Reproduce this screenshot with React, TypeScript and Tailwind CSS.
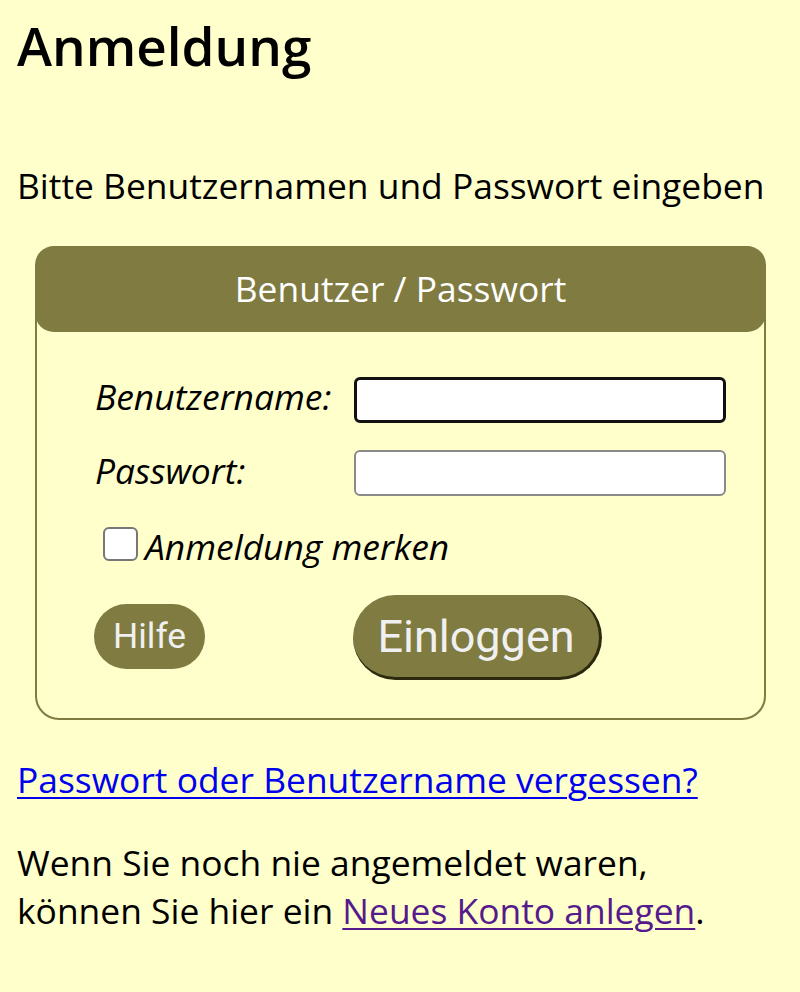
import React from "react";

export default function App() {
  return (
    <div className="min-h-[992px] w-[800px] bg-[#ffffcc] text-black overflow-hidden" style={{ fontFamily: '"Open Sans", sans-serif' }}>
      <div className="pl-[17px] pt-[10px]">
        <h1 className="text-[53px] font-semibold leading-[72px]">Anmeldung</h1>
        <p className="mt-[79px] text-[35.4px] leading-[48px]">Bitte Benutzernamen und Passwort eingeben</p>
      </div>
      <div className="ml-[35px] mt-[37px] w-[731px] rounded-[24px] border-2 border-[#7f7b41] pb-[38px]">
        <div className="-mx-[2px] -mt-[2px] h-[86px] rounded-[19px] bg-[#7f7b41] flex items-center justify-center text-white text-[35.4px]">
          Benutzer / Passwort
        </div>
        <div className="pl-[58px] pt-[40px] text-[35.4px] leading-[48px]">
          <div className="flex items-start">
            <label className="w-[259px] italic">Benutzername:</label>
            <div className="mt-[5px] w-[372px] h-[46px] bg-white border-[3px] border-[#111] rounded-[6px]" />
          </div>
          <div className="flex items-start mt-[23px]">
            <label className="w-[259px] italic">Passwort:</label>
            <div className="mt-[4px] w-[372px] h-[46px] bg-white border-2 border-[#8a8a8a] rounded-[6px]" />
          </div>
          <div className="flex items-start mt-[26px] pl-[8px]">
            <div className="mt-[5px] w-[35px] h-[34px] bg-white border-2 border-[#777] rounded-[6px]" />
            <span className="italic ml-[7px]">Anmeldung merken</span>
          </div>
          <div className="flex items-start mt-[25px]">
            <div className="w-[259px] pt-[9px] -ml-[1px]">
              <button
                className="bg-[#7f7b41] text-[#f0f0f0] text-[35.4px] leading-none h-[65px] w-[111px] rounded-full"
                style={{ fontFamily: "Roboto, sans-serif" }}
              >
                Hilfe
              </button>
            </div>
            <button
              className="bg-[#7f7b41] text-[#f0f0f0] text-[45px] leading-none h-[85px] w-[249px] rounded-full border-r-[3px] border-b-[3px] border-[#2b2a0e]"
              style={{ fontFamily: "Roboto, sans-serif" }}
            >
              Einloggen
            </button>
          </div>
        </div>
      </div>
      <div className="pl-[17px] mt-[35px] text-[35.4px] leading-[48px]">
        <a href="#" className="text-[#0000ee] underline underline-offset-[4px] decoration-2">Passwort oder Benutzername vergessen?</a>
        <p className="mt-[35px]">
          Wenn Sie noch nie angemeldet waren,
          <br />
          können Sie hier ein{" "}
          <a href="#" className="text-[#551a8b] underline underline-offset-[4px] decoration-2">Neues Konto anlegen</a>.
        </p>
      </div>
    </div>
  );
}
